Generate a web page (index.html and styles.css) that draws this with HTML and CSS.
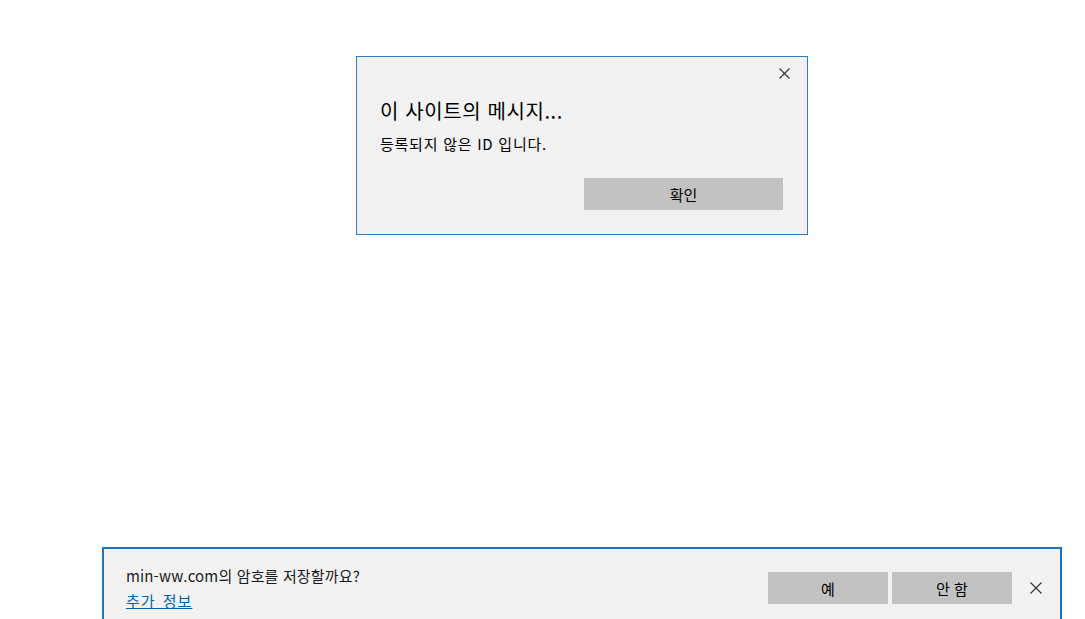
FILE: index.html
```html
<!DOCTYPE html>
<html lang="ko">
<head>
    <meta charset="UTF-8">
    <title>이 사이트의 메시지</title>
    <link rel="stylesheet" href="styles.css">
</head>
<body>
    <div class="page">
        <div class="dialog">
            <div class="dialog-top">
                <button class="close-btn" aria-label="닫기">
                    <svg width="11" height="11" viewBox="0 0 11 11"><path d="M0.5 0.5L10.5 10.5M10.5 0.5L0.5 10.5" stroke="#333" stroke-width="1.1" fill="none"/></svg>
                </button>
            </div>
            <div class="dialog-body">
                <h1 class="dialog-title">이 사이트의 메시지...</h1>
                <p class="dialog-msg">등록되지 않은 ID 입니다.</p>
            </div>
            <div class="dialog-actions">
                <button class="btn btn-ok">확인</button>
            </div>
        </div>

        <div class="save-bar">
            <div class="save-text">
                <p class="save-question">min-ww.com의 암호를 저장할까요?</p>
                <a href="#" class="save-more">추가 정보</a>
            </div>
            <div class="save-actions">
                <button class="btn btn-bar">예</button>
                <button class="btn btn-bar">안 함</button>
                <button class="bar-close" aria-label="닫기">
                    <svg width="12" height="12" viewBox="0 0 12 12"><path d="M0.5 0.5L11.5 11.5M11.5 0.5L0.5 11.5" stroke="#333" stroke-width="1.1" fill="none"/></svg>
                </button>
            </div>
        </div>
    </div>
</body>
</html>
```

FILE: styles.css
```css
* {
    margin: 0;
    padding: 0;
    box-sizing: border-box;
}

body {
    font-family: "Noto Sans CJK KR", "Noto Sans", sans-serif;
    background-color: #ffffff;
    color: #000000;
}

.page {
    height: 619px;
    overflow: hidden;
    display: flex;
    flex-direction: column;
}

button {
    font-family: inherit;
    border: none;
    cursor: pointer;
}

/* alert dialog */
.dialog {
    width: 452px;
    height: 179px;
    flex-shrink: 0;
    margin: 56px 0 0 356px;
    background-color: #f2f2f2;
    border: 1px solid #2f7cc4;
}

.dialog-top {
    display: flex;
    justify-content: flex-end;
    padding: 4px 11px 0 0;
}

.close-btn {
    width: 24px;
    height: 24px;
    background: none;
    display: flex;
    align-items: center;
    justify-content: center;
}

.dialog-body {
    padding-left: 23px;
}

.dialog-title {
    font-size: 20px;
    font-weight: normal;
    line-height: 28px;
    letter-spacing: 0.6px;
    margin-top: 12px;
}

.dialog-msg {
    font-size: 15px;
    line-height: 20px;
    letter-spacing: 0.75px;
    margin-top: 9px;
}

.dialog-actions {
    display: flex;
    justify-content: flex-end;
    padding-right: 24px;
    margin-top: 24px;
}

.btn {
    background-color: #c2c2c2;
    color: #000000;
    font-size: 15px;
    height: 32px;
}

.btn-ok {
    width: 199px;
}

/* password save bar */
.save-bar {
    width: 960px;
    height: 90px;
    flex-shrink: 0;
    margin: 312px 0 0 102px;
    background-color: #f2f2f2;
    border: 2px solid #1d74c2;
    display: flex;
    justify-content: space-between;
    padding: 16px 0 0 22px;
}

.save-text {
    display: flex;
    flex-direction: column;
    gap: 3px;
}

.save-question {
    font-size: 15px;
    line-height: 22px;
    letter-spacing: 0.15px;
    color: #1a1a1a;
}

.save-more {
    font-size: 15px;
    line-height: 22px;
    letter-spacing: 1px;
    word-spacing: 2px;
    color: #0063b1;
    text-decoration: underline;
    align-self: flex-start;
}

.save-actions {
    display: flex;
    align-items: center;
    gap: 4px;
    margin-top: 7px;
    height: 32px;
}

.btn-bar {
    width: 120px;
}

.bar-close {
    width: 32px;
    height: 32px;
    margin-left: 4px;
    margin-right: 8px;
    background: none;
    display: flex;
    align-items: center;
    justify-content: center;
}
```
